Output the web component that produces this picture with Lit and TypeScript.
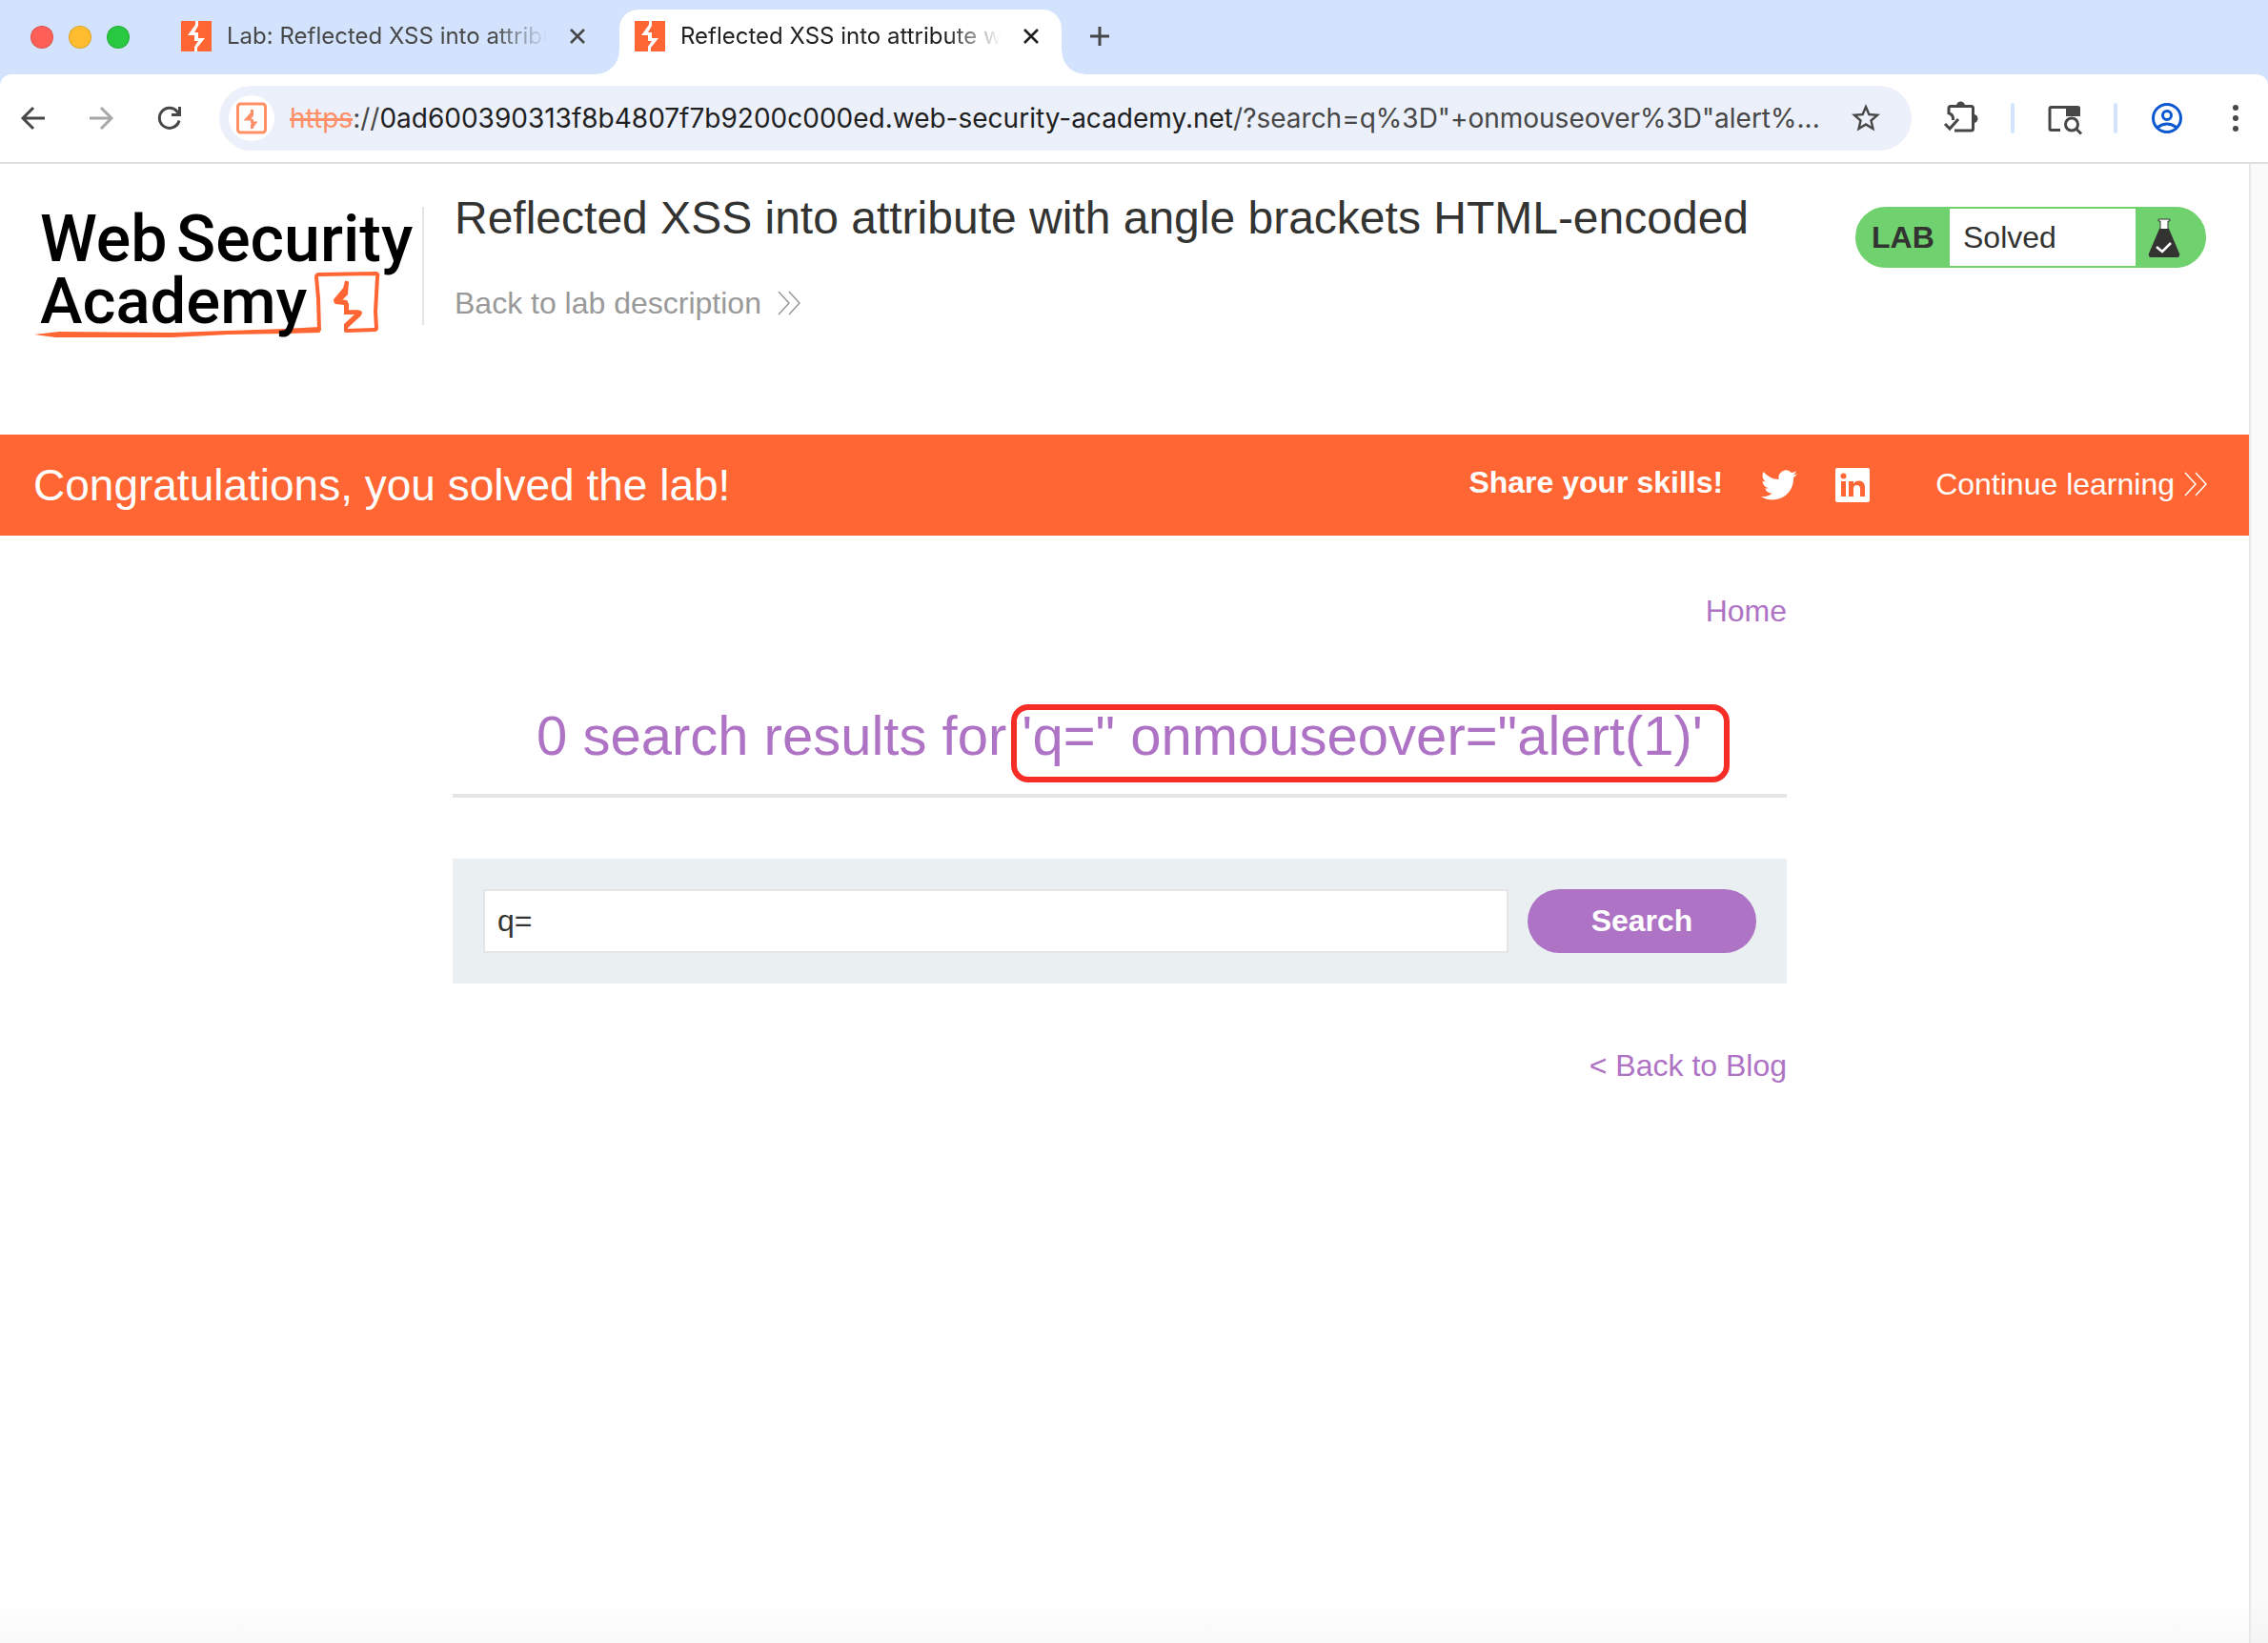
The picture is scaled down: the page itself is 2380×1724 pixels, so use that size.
import { LitElement, html, css } from "lit";
import { customElement, property, state } from "lit/decorators.js";

@customElement("double-chevron")
export class DoubleChevron extends LitElement {
  static styles = css`
    :host { display: inline-flex; }
    .chevron { display: block; width: 24px; height: 26px; fill: none; stroke: currentColor; stroke-width: 1.5; }
  `;
  render() {
    return html`<svg class="chevron" viewBox="0 0 24 26" aria-hidden="true">
      <path d="M1 1l11 12L1 25M12 1l11 12-11 12" />
    </svg>`;
  }
}

@customElement("browser-tab")
export class BrowserTab extends LitElement {
  @property() label = "";
  @property({ type: Boolean, reflect: true }) active = false;

  static styles = css`
    :host {
      position: relative;
      box-sizing: border-box;
      display: flex;
      align-items: center;
      width: 464px;
      height: 68px;
      padding: 0 20px 12px 16px;
      color: #474747;
      font: 24px/32px Inter, "Liberation Sans", sans-serif;
    }
    :host([active]) {
      background: #fff;
      color: #1f1f1f;
      border-radius: 20px 20px 0 0;
    }
    :host([active])::before,
    :host([active])::after {
      content: "";
      position: absolute;
      bottom: 0;
      width: 24px;
      height: 24px;
    }
    :host([active])::before {
      right: 100%;
      background: radial-gradient(circle at 0 0, transparent 23px, #fff 24px);
    }
    :host([active])::after {
      left: 100%;
      background: radial-gradient(circle at 100% 0, transparent 23px, #fff 24px);
    }
    .icon { flex: none; width: 32px; height: 32px; }
    .label {
      flex: 1;
      min-width: 0;
      margin-left: 16px;
      overflow: hidden;
      white-space: nowrap;
      mask-image: linear-gradient(to right, #000 calc(100% - 56px), transparent);
    }
    .close {
      flex: none;
      display: grid;
      place-items: center;
      width: 24px;
      height: 24px;
      margin-left: 20px;
      padding: 0;
      border: 0;
      background: none;
      color: inherit;
    }
    .cross { width: 16px; height: 16px; stroke: currentColor; stroke-width: 2.6; }
  `;

  render() {
    return html`
      <svg class="icon" viewBox="0 0 32 32" aria-hidden="true">
        <rect width="32" height="32" fill="#ff6633" />
        <path fill="#fff" d="M15 0h3v5l-4 7h4v6h7l-8 10v4h-3v-5l4-6h-4v-6H7l8-11z" />
      </svg>
      <span class="label">${this.label}</span>
      <button class="close" aria-label="Close tab">
        <svg class="cross" viewBox="0 0 16 16"><path d="M1 1l14 14M15 1L1 15" /></svg>
      </button>
    `;
  }
}

@customElement("browser-chrome")
export class BrowserChrome extends LitElement {
  static styles = css`
    :host { display: block; background: #d3e3fd; }
    .strip { display: flex; align-items: flex-end; height: 78px; padding-left: 32px; }
    .lights { display: flex; gap: 16px; align-self: center; margin-right: 38px; }
    .light { box-sizing: border-box; width: 24px; height: 24px; border-radius: 50%; border: 1px solid #0002; }
    .red { background: #ff5f57; }
    .amber { background: #febc2e; }
    .green { background: #28c840; }
    .idle { margin-right: 12px; }
    button { display: grid; place-items: center; padding: 0; border: 0; background: none; color: #474747; }
    svg { display: block; }
    .stroke { fill: none; stroke: currentColor; stroke-width: 3; }
    .add { width: 40px; height: 40px; margin: 0 0 20px 20px; }
    .bar {
      display: flex;
      align-items: center;
      height: 92px;
      padding: 0 30px 0 16px;
      background: #fff;
      border-bottom: 2px solid #e0e0e0;
      border-radius: 12px 12px 0 0;
    }
    .history { display: flex; gap: 36px; margin-right: 34px; }
    .nav { width: 36px; height: 36px; }
    .faded { color: #a8a8a8; }
    .omni {
      flex: 1;
      min-width: 0;
      box-sizing: border-box;
      display: flex;
      align-items: center;
      height: 68px;
      margin-right: 32px;
      padding: 0 30px 0 10px;
      border-radius: 34px;
      background: #ebf0fa;
    }
    .site { display: grid; place-items: center; width: 48px; height: 48px; border-radius: 50%; background: #fff; }
    .url {
      flex: 1;
      min-width: 0;
      margin: 0 20px 0 16px;
      overflow: hidden;
      white-space: nowrap;
      font: 28px/36px Inter, "Liberation Sans", sans-serif;
      color: #474747;
    }
    .scheme { color: #ff8f66; text-decoration: line-through; text-decoration-thickness: 3px; }
    .host { color: #1f1f1f; }
    .tool { width: 40px; height: 40px; }
    .sep { width: 4px; height: 32px; margin: 0 32px; border-radius: 2px; background: #d3e3fd; }
    .profile { color: #0b57d0; }
    .menu { margin-left: 48px; }
  `;

  render() {
    return html`
      <div class="strip">
        <div class="lights">
          <span class="light red"></span><span class="light amber"></span><span class="light green"></span>
        </div>
        <browser-tab class="idle" label="Lab: Reflected XSS into attribute"></browser-tab>
        <browser-tab active label="Reflected XSS into attribute with"></browser-tab>
        <button class="add" aria-label="New tab">
          <svg class="stroke" width="20" height="20" viewBox="0 0 20 20"><path d="M10 0v20M0 10h20" /></svg>
        </button>
      </div>
      <div class="bar">
        <div class="history">
          <button class="nav" aria-label="Back">
            <svg class="stroke" width="28" height="28" viewBox="0 0 28 28"><path d="M27 14H5M15 3L4 14l11 11" /></svg>
          </button>
          <button class="nav faded" aria-label="Forward">
            <svg class="stroke" width="28" height="28" viewBox="0 0 28 28"><path d="M2 14h22M14 3l11 11-11 11" /></svg>
          </button>
          <button class="nav" aria-label="Reload">
            <svg class="stroke" width="28" height="28" viewBox="0 0 28 28">
              <path d="M24 16.500A10.500 10.500 0 1 1 21.800 7L24 9.500" /><path d="M24.500 2v8.500H16" />
            </svg>
          </button>
        </div>
        <div class="omni">
          <span class="site">
            <svg width="32" height="34" viewBox="0 0 32 34">
              <rect x="1.500" y="2" width="29" height="30" rx="3" fill="none" stroke="#ff8f66" stroke-width="3" />
              <path fill="#ff8f66" d="M15 8h3v6l-2.500 4H18v2.500h4.500L18 26.500V28h-3v-4l1-2h-1v-2.500H7.500L15 11z" />
            </svg>
          </span>
          <span class="url"><span class="scheme">https</span>://<span class="host">0ad600390313f8b4807f7b9200c000ed.web-security-academy.net</span>/?search=q%3D"+onmouseover%3D"alert%...</span>
          <button aria-label="Bookmark this tab">
            <svg width="36" height="36" viewBox="0 0 24 24" fill="currentColor">
              <path d="M22 9.240l-7.190-.620L12 2 9.190 8.630 2 9.240l5.460 4.730L5.820 21 12 17.270 18.180 21l-1.630-7.030L22 9.240zM12 15.400l-3.760 2.270 1-4.280-3.320-2.880 4.380-.380L12 6.100l1.710 4.040 4.380.380-3.320 2.880 1 4.280L12 15.400z" />
            </svg>
          </button>
        </div>
        <button class="tool" aria-label="Extensions">
          <svg width="40" height="40" viewBox="0 0 40 40">
            <path class="stroke" d="M7 16V9.500Q7 7.500 9 7.500H30.500Q32.500 7.500 32.500 9.500V31Q32.500 33 30.500 33H13" />
            <path fill="currentColor" d="M15 7a4.500 4.500 0 0 1 9 0zM33 16a4.500 4.500 0 0 1 0 9z" />
            <path class="stroke" d="M7 15q5 1 4.500 7M3 26l5 5 9-10" />
          </svg>
        </button>
        <span class="sep"></span>
        <button class="tool" aria-label="Search tabs">
          <svg width="40" height="40" viewBox="0 0 40 40">
            <path class="stroke" d="M16 32.500H6.500Q5 32.500 5 31V10Q5 8.500 6.500 8.500H34" />
            <path fill="currentColor" d="M22 7h12.500Q37 7 37 9.500V18H22z" />
            <circle class="stroke" cx="28" cy="26.500" r="6.500" /><path class="stroke" d="M32.500 31l5.500 5.500" />
          </svg>
        </button>
        <span class="sep"></span>
        <button class="tool profile" aria-label="Profile">
          <svg class="stroke" width="32" height="32" viewBox="0 0 32 32">
            <circle cx="16" cy="16" r="14.500" /><circle cx="16" cy="13" r="4.500" /><path d="M5.500 26q10.500-8 21 0" />
          </svg>
        </button>
        <button class="menu" aria-label="Menu">
          <svg width="8" height="30" viewBox="0 0 8 30" fill="currentColor">
            <circle cx="4" cy="4" r="3" /><circle cx="4" cy="15" r="3" /><circle cx="4" cy="26" r="3" />
          </svg>
        </button>
      </div>
    `;
  }
}

@customElement("lab-header")
export class LabHeader extends LitElement {
  static styles = css`
    :host {
      display: flex;
      align-items: flex-start;
      height: 239px;
      padding: 45px 45px 0 36px;
      color: #333332;
    }
    .logo { flex: none; display: block; width: 400px; height: 144px; overflow: visible; }
    .word { font-family: Roboto, "Liberation Sans", sans-serif; font-weight: 500; }
    .info {
      flex: 1;
      display: flex;
      flex-direction: column;
      align-items: flex-start;
      height: 124px;
      margin-left: 7px;
      padding-left: 32px;
      border-left: 2px solid #e5e5e5;
    }
    .title { margin: -16px 0 0; font-size: 48px; line-height: 56px; font-weight: 400; }
    .back { display: flex; align-items: center; gap: 17px; margin-top: 43px; color: #999; font-size: 32px; line-height: 36px; text-decoration: none; }
    .status {
      flex: none;
      box-sizing: border-box;
      display: flex;
      width: 368px;
      height: 64px;
      border: 2px solid #70d26f;
      border-radius: 32px;
      overflow: hidden;
      background: #70d26f;
      font-size: 32px;
      line-height: 60px;
    }
    .tag { width: 97px; padding-left: 15px; box-sizing: border-box; font-weight: 700; }
    .value { width: 195px; padding-left: 14px; box-sizing: border-box; background: #fff; }
    .flask { margin: 10px 0 0 13px; }
  `;

  render() {
    return html`
      <svg class="logo" viewBox="0 0 400 144" role="img" aria-label="Web Security Academy">
        <path fill="#ff6633" d="M0 134l26-3 120 1 55-2 62-2 36-2 1 6-36 1-60 1-60 3H22z" />
        <path fill="none" stroke="#ff6633" stroke-width="4" stroke-linejoin="round" d="M299 130l-1-34-2-22q0-3 3-3l60-1q2 0 1 4l-2 36 1 17q0 2-2 2l-30 1v-5l15-14q0-1-14-1l-1-10-11-2 10-12 2-8" />
        <path fill="#ff6633" d="M327 78l3 1-1 13-8 8 9 1v9h10q6 1 2 5l-13 12h-4v-4l11-10h-11V103l-9-1q-3-2 0-5l8-9z" />
        <g class="word" fill="#000">
          <text x="6" y="57" font-size="68">Web</text>
          <text x="149" y="57" font-size="68">Security</text>
          <text x="6" y="122" font-size="67">Academy</text>
        </g>
      </svg>
      <div class="info">
        <h2 class="title">Reflected XSS into attribute with angle brackets HTML-encoded</h2>
        <a class="back" href="#">Back to lab description <double-chevron></double-chevron></a>
      </div>
      <div class="status">
        <span class="tag">LAB</span>
        <span class="value">Solved</span>
        <svg class="flask" width="34" height="42" viewBox="0 0 34 42" aria-hidden="true">
          <path fill="#fff" stroke="#333332" stroke-width="1" d="M11 1h12v2h-2v9h-8V3h-2z" />
          <path fill="#333332" d="M12 11h10l11 26q1 4-3 4H4q-4 0-3-4z" />
          <path fill="none" stroke="#fff" stroke-width="2.500" d="M9 30l6 5 9-9" />
        </svg>
      </div>
    `;
  }
}

@customElement("solved-banner")
export class SolvedBanner extends LitElement {
  static styles = css`
    :host {
      box-sizing: border-box;
      display: flex;
      align-items: center;
      height: 106px;
      padding: 0 44px 0 35px;
      background: #ff6633;
      color: #fff;
      font-size: 32px;
      line-height: 36px;
    }
    .message { flex: 1; margin: 0; font-size: 46px; line-height: 52px; font-weight: 400; }
    .share { padding-bottom: 6px; font-weight: 700; }
    a { display: flex; align-items: center; color: inherit; text-decoration: none; }
    .twitter,
    .linkedin { margin-left: 40px; }
    .next { gap: 10px; margin-left: 69px; padding-bottom: 2px; }
    svg { display: block; }
  `;

  render() {
    return html`
      <h4 class="message">Congratulations, you solved the lab!</h4>
      <span class="share">Share your skills!</span>
      <a class="twitter" href="#" aria-label="Share on Twitter">
        <svg width="38" height="38" viewBox="0 0 24 24" fill="#fff">
          <path d="M23.950 4.570a10 10 0 0 1-2.820.770 4.960 4.960 0 0 0 2.160-2.720c-.950.550-2 .950-3.130 1.180a4.920 4.920 0 0 0-8.380 4.480C7.690 8.090 4.070 6.130 1.640 3.160a4.820 4.820 0 0 0-.670 2.480c0 1.710.870 3.210 2.190 4.100a4.900 4.900 0 0 1-2.230-.620v.060a4.920 4.920 0 0 0 3.950 4.830 5 5 0 0 1-2.210.080 4.940 4.940 0 0 0 4.600 3.420A9.870 9.870 0 0 1 0 19.540a14 14 0 0 0 7.550 2.210c9.050 0 14-7.500 14-13.980 0-.210 0-.420-.020-.630a9.940 9.940 0 0 0 2.420-2.570z" />
        </svg>
      </a>
      <a class="linkedin" href="#" aria-label="Share on LinkedIn">
        <svg width="36" height="36" viewBox="0 0 36 36">
          <rect width="36" height="36" rx="2" fill="#fff" />
          <g fill="#ff6633">
            <circle cx="8.500" cy="8.500" r="3" /><path d="M6 14h5v16H6zM14 14h5v2.500q2-3 5.500-3 6.500 0 6.500 7.500v9h-5v-8q0-4-3.500-4T19 22v8h-5z" />
          </g>
        </svg>
      </a>
      <a class="next" href="#">Continue learning <double-chevron></double-chevron></a>
    `;
  }
}

@customElement("search-results")
export class SearchResults extends LitElement {
  @state() private term = "q=";

  static styles = css`
    :host { display: block; width: 1400px; max-width: 100%; margin: 0 auto; color: #333332; }
    a { color: #ae73c4; text-decoration: none; }
    .row { display: flex; justify-content: flex-end; font-size: 32px; line-height: 36px; }
    .heading {
      margin: 77px 0 64px;
      padding-bottom: 25px;
      border-bottom: 4px solid #e5e5e5;
      color: #ae73c4;
      font-size: 58px;
      line-height: 72px;
      font-weight: 400;
      text-align: center;
    }
    .payload { position: relative; white-space: nowrap; }
    .mark { position: absolute; inset: 0 -28px -17px -11px; border: 6px solid #f52d26; border-radius: 18px; }
    .form { display: flex; gap: 20px; margin-bottom: 68px; padding: 32px; background: #eaeff2; }
    .field {
      flex: 1;
      min-width: 0;
      box-sizing: border-box;
      height: 67px;
      padding: 0 13px;
      border: 2px solid #e5e5e5;
      background: #fff;
      color: #333332;
      font: 32px/36px "Liberation Sans", Arial, sans-serif;
      outline: 0;
    }
    .submit {
      width: 240px;
      height: 67px;
      padding: 0 0 2px;
      border: 0;
      border-radius: 34px;
      background: #ae73c4;
      color: #fff;
      font: 700 32px/36px "Liberation Sans", Arial, sans-serif;
    }
  `;

  private onInput(event: Event) {
    this.term = (event.target as HTMLInputElement).value;
  }

  render() {
    return html`
      <nav class="row"><a href="#">Home</a></nav>
      <h1 class="heading">0 search results for <span class="payload">'q=" onmouseover="alert(1)'<span class="mark"></span></span></h1>
      <form class="form" @submit=${(event: Event) => event.preventDefault()}>
        <input class="field" type="text" aria-label="Search the blog" .value=${this.term} @input=${this.onInput} />
        <button class="submit" type="submit">Search</button>
      </form>
      <div class="row"><a href="#">&lt; Back to Blog</a></div>
    `;
  }
}

@customElement("app-root")
export class AppRoot extends LitElement {
  static styles = css`
    :host {
      display: flex;
      flex-direction: column;
      min-height: 100vh;
      background: #fff;
      font-family: "Liberation Sans", Arial, sans-serif;
    }
    .view { flex: 1; display: flex; }
    .page { flex: 1; min-width: 0; background: linear-gradient(to top, #f9f9f9, #fff 44px); }
    .gutter {
      box-sizing: border-box;
      width: 20px;
      border-left: 2px solid #e8e8e8;
      background: linear-gradient(to top, #f4f4f4, #fafafa 44px);
    }
    .content { padding: 61px 10px 0 0; }
  `;

  render() {
    return html`
      <browser-chrome></browser-chrome>
      <div class="view">
        <main class="page">
          <lab-header></lab-header>
          <solved-banner></solved-banner>
          <div class="content"><search-results></search-results></div>
        </main>
        <div class="gutter"></div>
      </div>
    `;
  }
}
